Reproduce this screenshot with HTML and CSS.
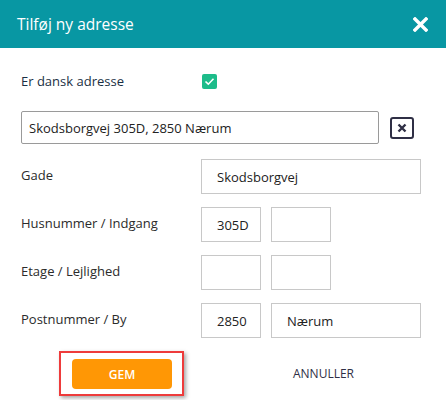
FILE: index.html
```html
<!DOCTYPE html>
<html lang="da">
<head>
<meta charset="utf-8">
<link rel="stylesheet" href="styles.css">
</head>
<body>
<div class="dialog">
  <div class="header">
    <span class="title">Tilføj ny adresse</span>
    <svg class="close" width="15" height="15" viewBox="0 0 15 15"><path d="M2 2 L13 13 M13 2 L2 13" stroke="#fff" stroke-width="3.4" stroke-linecap="square"/></svg>
  </div>
  <div class="body">
    <div class="dk-row">
      <span class="dk-label">Er dansk adresse</span>
      <span class="check"><svg width="15" height="15" viewBox="0 0 15 15"><path d="M3.5 7.5 L6.3 10.2 L11.5 4.8" fill="none" stroke="#fff" stroke-width="1.6"/></svg></span>
    </div>
    <div class="search-row">
      <div class="input search">Skodsborgvej 305D, 2850 Nærum</div>
      <span class="clear"><svg width="10" height="10" viewBox="0 0 10 10"><path d="M1.5 1.5 L8.5 8.5 M8.5 1.5 L1.5 8.5" stroke="#2f2f45" stroke-width="2.4"/></svg></span>
    </div>
    <div class="rows">
      <div class="row">
        <span class="label">Gade</span>
        <div class="input wide">Skodsborgvej</div>
      </div>
      <div class="row">
        <span class="label">Husnummer / Indgang</span>
        <div class="input small">305D</div>
        <div class="input small"></div>
      </div>
      <div class="row">
        <span class="label">Etage / Lejlighed</span>
        <div class="input small"></div>
        <div class="input small"></div>
      </div>
      <div class="row">
        <span class="label">Postnummer / By</span>
        <div class="input small">2850</div>
        <div class="input city">Nærum</div>
      </div>
    </div>
    <div class="actions">
      <div class="highlight"><button class="gem">GEM</button></div>
      <button class="cancel">ANNULLER</button>
    </div>
  </div>
</div>
</body>
</html>
```
FILE: styles.css
```css
* { box-sizing: border-box; }
html, body { margin: 0; padding: 0; background: #fff; }
body { font-family: "Open Sans", "Noto Sans", sans-serif; width: 446px; height: 400px; overflow: hidden; }
.header {
  height: 48px;
  background: #0897a3;
  display: flex;
  align-items: center;
  justify-content: space-between;
  padding: 0 18px 0 17px;
}
.title { color: #fff; font-size: 15.5px; }
.close { display: block; margin-top: 1px; }
.body { padding: 0 25px 0 21px; }
.dk-row { display: flex; align-items: center; height: 16px; margin-top: 25px; }
.dk-label { font-size: 13px; color: #1a2f44; width: 181px; }
.check {
  width: 15px; height: 15px; border-radius: 2px; background: #1dbc8a;
  display: flex;
}
.search-row { display: flex; align-items: center; margin-top: 22px; }
.input {
  border: 1px solid #c8c8c8;
  height: 35px;
  font-size: 13px;
  color: #222;
  display: flex;
  align-items: center;
  padding-left: 15px;
}
.input.search { width: 358px; height: 33px; border-color: #9a9a9a; padding-left: 7px; border-radius: 2px; }
.clear {
  margin-left: 11px;
  width: 24px; height: 22px;
  border: 2.5px solid #2f2f45;
  border-radius: 3px;
  display: flex; align-items: center; justify-content: center;
}
.rows { display: flex; flex-direction: column; gap: 13px; margin-top: 15px; }
.row { display: flex; align-items: center; gap: 10px; }
.label { width: 170px; font-size: 13px; color: #2b2b2b; margin-top: -3px; }
.input.wide { width: 220px; }
.input.small { width: 60px; }
.input.city { width: 150px; }
.actions { display: flex; align-items: center; margin-top: 13px; }
.highlight {
  margin-left: 38px;
  width: 125px; height: 45px;
  border: 2px solid #ee3b3b;
  box-shadow: 2px 2px 4px rgba(0,0,0,0.35);
  display: flex; align-items: center; justify-content: center;
  padding-left: 1px;
}
.gem {
  width: 100px; height: 30px;
  background: #ff9705; color: #fff;
  border: none; border-radius: 4px;
  font-family: inherit; font-size: 12px; font-weight: 600;
  margin-top: 1px;
}
.cancel {
  margin-left: 109px;
  background: none; border: none; padding: 0;
  font-family: inherit; font-size: 12px; color: #2f2f45;
}
```
